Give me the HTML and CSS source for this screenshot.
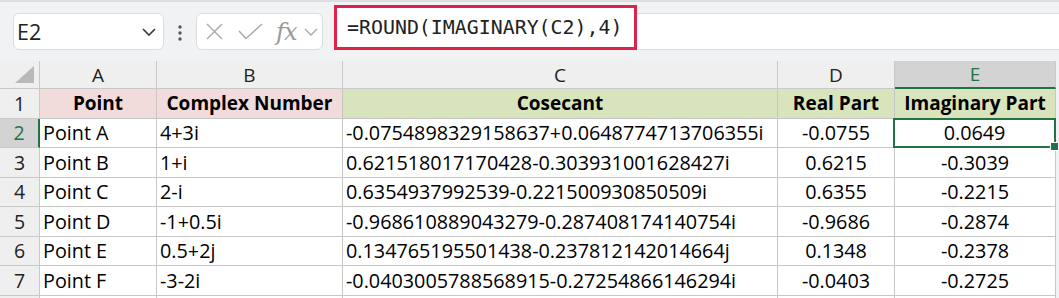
FILE: index.html
```html
<!DOCTYPE html>
<html>
<head>
    <meta charset="utf-8">
    <title>IMAGINARY</title>
    <link rel="stylesheet" href="styles.css">
</head>
<body>
    <div class="toolbar">
        <div class="namebox">
            <span class="name">E2</span>
            <svg class="chev" width="14" height="8" viewBox="0 0 14 8"><path d="M1 1 L7 7 L13 1" fill="none" stroke="#333" stroke-width="1.6"/></svg>
        </div>
        <div class="dots">
            <svg width="4" height="16" viewBox="0 0 4 16"><circle cx="2" cy="2" r="1.7" fill="#555"/><circle cx="2" cy="8" r="1.7" fill="#555"/><circle cx="2" cy="14" r="1.7" fill="#555"/></svg>
        </div>
        <div class="fxbox">
            <svg width="17" height="17" viewBox="0 0 17 17"><path d="M1 1 L16 16 M16 1 L1 16" stroke="#a8a8a8" stroke-width="1.4"/></svg>
            <svg width="25" height="17" viewBox="0 0 25 17"><path d="M1 8 L8 15.5 L24 1" fill="none" stroke="#a8a8a8" stroke-width="1.4"/></svg>
            <span class="fx">fx</span>
            <svg width="14" height="8" viewBox="0 0 14 8"><path d="M1 1 L7 7 L13 1" fill="none" stroke="#a8a8a8" stroke-width="1.4"/></svg>
        </div>
        <div class="formula">
            <div class="highlight">=ROUND(IMAGINARY(C2),4)</div>
        </div>
    </div>

    <div class="sheet">
        <div class="hd corner"><span class="tri"></span></div>
        <div class="hd">A</div>
        <div class="hd">B</div>
        <div class="hd">C</div>
        <div class="hd">D</div>
        <div class="hd hd-active">E</div>

        <div class="rh">1</div>
        <div class="c th pink">Point</div>
        <div class="c th pink">Complex Number</div>
        <div class="c th green">Cosecant</div>
        <div class="c th green">Real Part</div>
        <div class="c th green">Imaginary Part</div>

        <div class="rh rh-active">2</div>
        <div class="c">Point A</div>
        <div class="c">4+3i</div>
        <div class="c">-0.0754898329158637+0.0648774713706355i</div>
        <div class="c num">-0.0755</div>
        <div class="c num sel">0.0649</div>

        <div class="rh">3</div>
        <div class="c">Point B</div>
        <div class="c">1+i</div>
        <div class="c">0.621518017170428-0.303931001628427i</div>
        <div class="c num">0.6215</div>
        <div class="c num">-0.3039</div>

        <div class="rh">4</div>
        <div class="c">Point C</div>
        <div class="c">2-i</div>
        <div class="c">0.6354937992539-0.221500930850509i</div>
        <div class="c num">0.6355</div>
        <div class="c num">-0.2215</div>

        <div class="rh">5</div>
        <div class="c">Point D</div>
        <div class="c">-1+0.5i</div>
        <div class="c">-0.968610889043279-0.287408174140754i</div>
        <div class="c num">-0.9686</div>
        <div class="c num">-0.2874</div>

        <div class="rh">6</div>
        <div class="c">Point E</div>
        <div class="c">0.5+2j</div>
        <div class="c">0.134765195501438-0.237812142014664j</div>
        <div class="c num">0.1348</div>
        <div class="c num">-0.2378</div>

        <div class="rh">7</div>
        <div class="c">Point F</div>
        <div class="c">-3-2i</div>
        <div class="c">-0.0403005788568915-0.27254866146294i</div>
        <div class="c num">-0.0403</div>
        <div class="c num">-0.2725</div>

        <div class="rh"></div>
        <div class="c"></div>
        <div class="c"></div>
        <div class="c"></div>
        <div class="c"></div>
        <div class="c"></div>
    </div>
</body>
</html>
```

FILE: styles.css
```css
* {
    box-sizing: border-box;
}

body {
    margin: 0;
    width: 1059px;
    height: 298px;
    overflow: hidden;
    background: #f0f2f4;
    font-family: "Open Sans", "Noto Sans", sans-serif;
}

.toolbar {
    height: 61px;
    display: flex;
    align-items: flex-start;
    padding-top: 13px;
    padding-left: 13px;
    border-top: 2px solid #dcdee1;
}

.namebox {
    width: 151px;
    height: 37px;
    background: #fff;
    border: 1px solid #dcdcdc;
    border-radius: 6px;
    display: flex;
    align-items: center;
    justify-content: space-between;
    padding: 0 7px 0 3px;
    margin-top: -2px;
}

.name {
    font-size: 21.5px;
    color: #222;
}

.dots {
    width: 32px;
    display: flex;
    justify-content: center;
    padding-top: 10px;
}

.fxbox {
    width: 127px;
    height: 37px;
    margin-top: -2px;
    background: #fff;
    border: 1px solid #dcdcdc;
    border-radius: 6px;
    display: flex;
    align-items: center;
    gap: 15px;
    padding-left: 9px;
}

.fxbox svg:last-child {
    margin-left: -7px;
}

.fx {
    font-family: "DejaVu Serif", "Liberation Serif", serif;
    font-style: italic;
    font-size: 24px;
    color: #9a9a9a;
    margin-left: -2px;
    letter-spacing: -1px;
}

.formula {
    flex: 1;
    height: 37px;
    margin-top: -2px;
    margin-left: 11px;
    background: #fff;
    border-top: 1px solid #dcdcdc;
    border-bottom: 1px solid #dcdcdc;
    display: flex;
    align-items: center;
}

.highlight {
    width: 303px;
    height: 45px;
    border: 3px solid #e0224a;
    background: #fff;
    font-family: "DejaVu Sans Mono", monospace;
    font-size: 19.9px;
    color: #222;
    padding-left: 10px;
    display: flex;
    align-items: center;
    margin-top: -8px;
}

.sheet {
    display: grid;
    grid-template-columns: 40px 117px 186px 435px 117px 161px;
    grid-template-rows: 28px repeat(8, 29.5px);
    font-size: 19.8px;
}

.hd {
    background: #efefef;
    border-right: 1px solid #c9c9c9;
    border-bottom: 1px solid #c9c9c9;
    display: flex;
    align-items: center;
    justify-content: center;
    color: #222;
    font-size: 19px;
}

.corner {
    justify-content: flex-end;
    align-items: flex-end;
    padding: 0 5px 5px 0;
}

.tri {
    width: 0;
    height: 0;
    border-left: 19px solid transparent;
    border-bottom: 17px solid #b9b9b9;
}

.hd-active {
    background: #d3d3d3;
    color: #217346;
    border-bottom: 2px solid #217346;
}

.rh {
    background: #efefef;
    border-right: 1px solid #c9c9c9;
    border-bottom: 1px solid #c9c9c9;
    display: flex;
    align-items: center;
    justify-content: center;
    color: #222;
    font-size: 19.5px;
}

.rh-active {
    background: #d3d3d3;
    color: #217346;
    border-right: 2px solid #217346;
}

.c {
    background: #fff;
    border-right: 1px solid #c6c6c6;
    border-bottom: 1px solid #c6c6c6;
    display: flex;
    align-items: center;
    padding-left: 3px;
    color: #000;
    white-space: nowrap;
}

.th {
    font-weight: bold;
    font-size: 19px;
    justify-content: center;
    padding-left: 0;
}

.pink {
    background: #f2dcdb;
}

.green {
    background: #d8e4bc;
}

.num {
    justify-content: center;
    padding-left: 0;
}

.sel {
    position: relative;
    border: 2px solid #217346;
    margin: -1px 0 0 -2px;
}

.sel::after {
    content: '';
    position: absolute;
    right: -5px;
    bottom: -5px;
    width: 7px;
    height: 7px;
    background: #217346;
    border: 1px solid #fff;
}
```
